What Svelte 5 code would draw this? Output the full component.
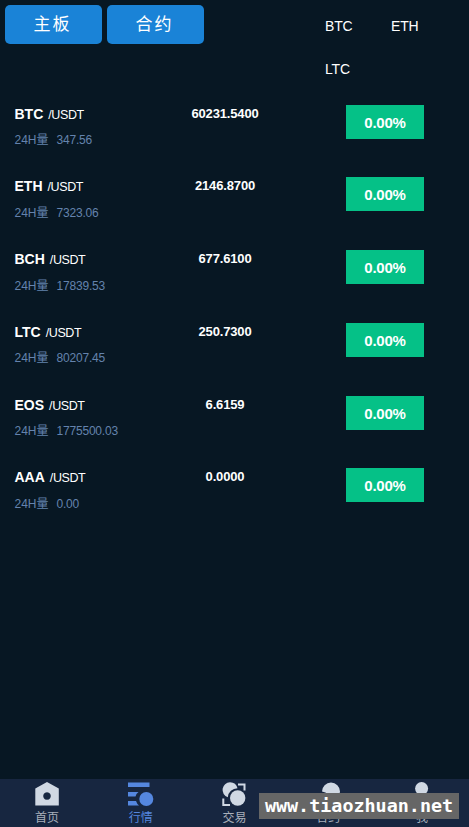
<script lang="ts">
  interface Market {
    coin: string;
    volume: string;
    price: string;
    change: string;
  }

  const boards = ['主板', '合约'];
  const filters = ['BTC', 'ETH', 'LTC'];

  const markets: Market[] = [
    { coin: 'BTC', volume: '347.56', price: '60231.5400', change: '0.00%' },
    { coin: 'ETH', volume: '7323.06', price: '2146.8700', change: '0.00%' },
    { coin: 'BCH', volume: '17839.53', price: '677.6100', change: '0.00%' },
    { coin: 'LTC', volume: '80207.45', price: '250.7300', change: '0.00%' },
    { coin: 'EOS', volume: '1775500.03', price: '6.6159', change: '0.00%' },
    { coin: 'AAA', volume: '0.00', price: '0.0000', change: '0.00%' }
  ];

  const tabs = [
    { id: 'home', label: '首页' },
    { id: 'market', label: '行情' },
    { id: 'trade', label: '交易' },
    { id: 'contract', label: '合约' },
    { id: 'mine', label: '我' }
  ];

  let activeTab = $state('market');
</script>

<div class="page">
  <header class="top">
    <div class="boards">
      {#each boards as board}
        <button class="board-btn">{board}</button>
      {/each}
    </div>
    <div class="filters">
      {#each filters as filter}
        <span class="filter">{filter}</span>
      {/each}
    </div>
  </header>

  <main class="market-list">
    {#each markets as item (item.coin)}
      <div class="row">
        <div class="pair">
          <div class="name"><b>{item.coin}</b><span>/USDT</span></div>
          <div class="volume"><span>24H量</span><span class="amount">{item.volume}</span></div>
        </div>
        <div class="price">{item.price}</div>
        <div class="change">{item.change}</div>
      </div>
    {/each}
  </main>

  <nav class="tabbar">
    {#each tabs as tab (tab.id)}
      <button class="tab" class:active={activeTab === tab.id} onclick={() => (activeTab = tab.id)}>
        <svg width="26" height="26" viewBox="0 0 26 26" fill="currentColor">
          {#if tab.id === 'home'}
            <path fill-rule="evenodd" d="M13 1 L24.800 7.500 V24.500 H1.300 V7.500 Z M13 11.200 a3.800 3.800 0 1 0 0.01 0 Z" />
          {:else if tab.id === 'market'}
            <path d="M0 1.500 H21.500 V6 H0 Z M0 11 H10.500 Q8 12.500 7.500 15.500 H0 Z M0 20 H8 Q9 23 11 24.500 H0 Z" />
            <circle cx="18.300" cy="18" r="7" />
          {:else if tab.id === 'trade'}
            <path d="M9 1.200 a7.700 7.700 0 0 1 7.500 6 A9.800 9.800 0 0 0 6.800 16.200 A7.700 7.700 0 0 1 9 1.200 Z" />
            <circle cx="16.700" cy="17" r="7.700" />
            <path d="M17 3.500 H23.500 V9.500 M2.300 17.500 V24 H9" fill="none" stroke="currentColor" stroke-width="2" />
          {:else if tab.id === 'contract'}
            <path d="M7 10.500 A9 9 0 1 1 25 10.500 A9 9 0 0 1 16 19.500 Q14.500 11.500 7 10.500 Z" />
          {:else}
            <circle cx="12.600" cy="7.600" r="6.500" />
            <path d="M3 24 Q3 15 13 15 Q23 15 23 24 Z" />
          {/if}
        </svg>
        <span>{tab.label}</span>
      </button>
    {/each}
    <div class="watermark">www.tiaozhuan.net</div>
  </nav>
</div>

<style>
  :global(body) {
    background: #071723;
  }

  .page {
    display: flex;
    flex-direction: column;
    height: 827px;
    overflow: hidden;
    background: #071723;
    color: #fff;
    font-family: "Liberation Sans", Arial, "Noto Sans CJK SC", sans-serif;
  }

  button {
    border: none;
    padding: 0;
    font-family: inherit;
    cursor: pointer;
  }

  /* 顶部 */
  .top {
    display: flex;
    justify-content: space-between;
    height: 86.5px;
  }

  .boards {
    display: flex;
    gap: 5px;
    padding: 5px 0 0 5px;
  }

  .board-btn {
    width: 97px;
    height: 39px;
    padding: 0 2px 5px 0;
    border-radius: 5px;
    background: #1a83d7;
    color: #fff;
    font-size: 17px;
    letter-spacing: 2px;
  }

  .filters {
    display: flex;
    flex-wrap: wrap;
    align-content: flex-start;
    width: 144px;
    padding-top: 5px;
  }

  .filter {
    width: 66px;
    line-height: 43px;
    font-size: 14px;
    letter-spacing: -0.2px;
  }

  /* 行情列表 */
  .market-list {
    flex: 1;
  }

  .row {
    display: flex;
    height: 72.75px;
    padding: 18px 45px 0 14.5px;
    box-sizing: border-box;
  }

  .pair {
    width: 155.5px;
  }

  .name {
    display: flex;
    align-items: baseline;
    gap: 5px;
    line-height: 18px;
    font-size: 12.5px;
    letter-spacing: -0.4px;
  }

  .name b {
    font-size: 14px;
    letter-spacing: 0;
  }

  .volume {
    display: flex;
    gap: 8px;
    margin-top: 7.5px;
    line-height: 18px;
    font-size: 12px;
    color: #6483ad;
  }

  .amount {
    letter-spacing: -0.2px;
  }

  .price {
    width: 110px;
    line-height: 17px;
    text-align: center;
    font-size: 13px;
    font-weight: bold;
    letter-spacing: -0.15px;
  }

  .change {
    width: 78px;
    height: 34px;
    margin-left: auto;
    line-height: 35px;
    text-align: center;
    font-size: 15px;
    font-weight: bold;
    letter-spacing: -0.25px;
    background: #05c187;
  }

  /* 底部导航 */
  .tabbar {
    position: relative;
    display: flex;
    height: 48px;
    background: #172640;
  }

  .tab {
    display: flex;
    flex: 1;
    flex-direction: column;
    align-items: center;
    padding-top: 2px;
    background: none;
    color: #d0d8e3;
    font-size: 12px;
    line-height: 18px;
  }

  .tab svg {
    flex-shrink: 0;
  }

  .tab span {
    margin-top: 2px;
    color: #a9b0bb;
  }

  .tab.active,
  .tab.active span {
    color: #5587df;
  }

  .watermark {
    position: absolute;
    right: 10px;
    bottom: 8px;
    width: 200px;
    height: 26px;
    line-height: 26px;
    text-align: center;
    font-family: "DejaVu Sans Mono", monospace;
    font-size: 18.4px;
    font-weight: bold;
    background: #666;
  }
</style>
